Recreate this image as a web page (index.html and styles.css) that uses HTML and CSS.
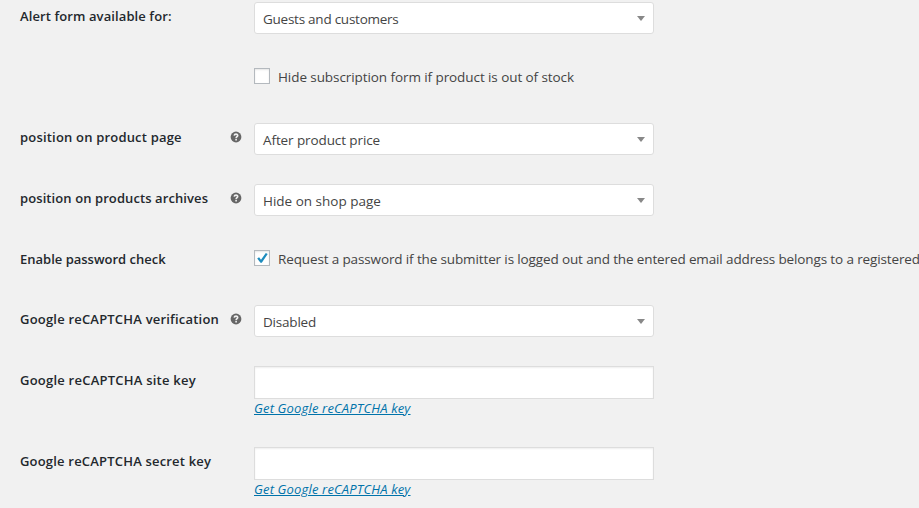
FILE: index.html
```html
<!DOCTYPE html>
<html lang="en">
<head>
<meta charset="utf-8">
<title>Settings</title>
<link rel="stylesheet" href="styles.css">
</head>
<body>
<form class="settings">
  <div class="row r1"><div class="label"><span class="t1">Alert form available for:</span></div><div class="select"><span class="v1">Guests and customers</span><i class="arrow"></i></div></div>
  <div class="row r2"><div class="label"></div><label class="check"><span class="box"></span><span class="c1">Hide subscription form if product is out of stock</span></label></div>
  <div class="row r3"><div class="label"><span class="t2">position on product page</span><svg class="help" viewBox="0 0 12 12"><circle cx="6" cy="6" r="5.4"/><path d="M4.2 4.6C4.4 2.6 7.7 2.7 7.7 4.5C7.7 5.7 6.1 5.7 6.1 7.2M6.1 8.1V9.6"/></svg></div><div class="select"><span class="v2">After product price</span><i class="arrow"></i></div></div>
  <div class="row r4"><div class="label"><span class="t3">position on products archives</span><svg class="help" viewBox="0 0 12 12"><circle cx="6" cy="6" r="5.4"/><path d="M4.2 4.6C4.4 2.6 7.7 2.7 7.7 4.5C7.7 5.7 6.1 5.7 6.1 7.2M6.1 8.1V9.6"/></svg></div><div class="select"><span class="v3">Hide on shop page</span><i class="arrow"></i></div></div>
  <div class="row r5"><div class="label"><span class="t4">Enable password check</span></div><label class="check"><span class="box"><svg class="tick" viewBox="0 0 14 14"><path d="M2.2 7.4L4.1 6.2L6 8.7L10.8 2L12.7 3.1L6.8 11.8H5.5Z"/></svg></span><span class="c2">Request a password if the submitter is logged out and the entered email address belongs to a registered</span></label></div>
  <div class="row r6"><div class="label"><span class="t5">Google reCAPTCHA verification</span><svg class="help" viewBox="0 0 12 12"><circle cx="6" cy="6" r="5.4"/><path d="M4.2 4.6C4.4 2.6 7.7 2.7 7.7 4.5C7.7 5.7 6.1 5.7 6.1 7.2M6.1 8.1V9.6"/></svg></div><div class="select"><span class="v4">Disabled</span><i class="arrow"></i></div></div>
  <div class="row r7"><div class="label"><span class="t6">Google reCAPTCHA site key</span></div><div class="field"><input class="text" type="text" aria-label="Google reCAPTCHA site key"><a class="link" href="#">Get Google reCAPTCHA key</a></div></div>
  <div class="row r8"><div class="label"><span class="t7">Google reCAPTCHA secret key</span></div><div class="field"><input class="text" type="text" aria-label="Google reCAPTCHA secret key"><a class="link" href="#">Get Google reCAPTCHA key</a></div></div>
</form>
</body>
</html>
```
FILE: styles.css
```css
* { box-sizing: border-box; }
body { margin: 0; height: 508px; overflow: hidden; background: #f1f1f1; font: 14px/20px "Open Sans", "Noto Sans", sans-serif; color: #444; }
.settings { width: 100%; overflow: hidden; padding: 2px 0 0 20px; display: grid; grid-template-columns: minmax(0, 1fr); grid-template-rows: 61px 60px 61px 61px 60px 61px 81px 81px; }
.row { display: grid; grid-template-columns: 234px minmax(0, 1fr); align-items: start; white-space: nowrap; }
.label { width: 222px; height: 20px; margin-top: 4px; display: flex; align-items: center; justify-content: space-between; font-size: 13px; font-weight: 600; color: #23282d; }
.t1 { letter-spacing: .1px; }
.t2 { letter-spacing: .19px; }
.t3 { letter-spacing: .09px; }
.t5 { letter-spacing: .2px; }
.t6 { letter-spacing: .23px; }
.t7 { letter-spacing: .19px; }
.help { width: 12px; height: 12px; margin-top: -1px; fill: #666; }
.help path { fill: none; stroke: #f1f1f1; stroke-width: 1.6; }
.select { width: 400px; height: 32px; display: flex; align-items: center; justify-content: space-between; padding: 2px 8px 0 8px; background: #fff; border: 1px solid #ddd; border-radius: 3px; }
.select span { font-size: 13.5px; }
.v1 { letter-spacing: -.25px; }
.v2 { letter-spacing: -.1px; }
.v4 { letter-spacing: -.2px; }
.arrow { width: 0; height: 0; margin-top: -1px; border: 4px solid transparent; border-top: 5px solid #888; border-bottom: 0; }
.check { display: flex; gap: 8px; margin-top: 5px; }
.check > span:last-child { font-size: 13.5px; margin-top: -1px; }
.c1 { letter-spacing: -.08px; }
.c2 { letter-spacing: -.13px; }
.box { flex: none; width: 16px; height: 16px; border: 1px solid #b4b9be; background: #fff; box-shadow: inset 0 1px 2px rgba(0,0,0,.1); }
.tick { display: block; width: 14px; height: 14px; fill: #1e8cbe; }
.field { width: 400px; }
.text { display: block; width: 400px; height: 33px; border: 1px solid #ddd; box-shadow: inset 0 1px 2px rgba(0,0,0,.07); background: #fff; }
.link { display: block; width: max-content; margin-top: -1px; font-size: 13px; font-style: italic; letter-spacing: .16px; color: #0073aa; }
```
